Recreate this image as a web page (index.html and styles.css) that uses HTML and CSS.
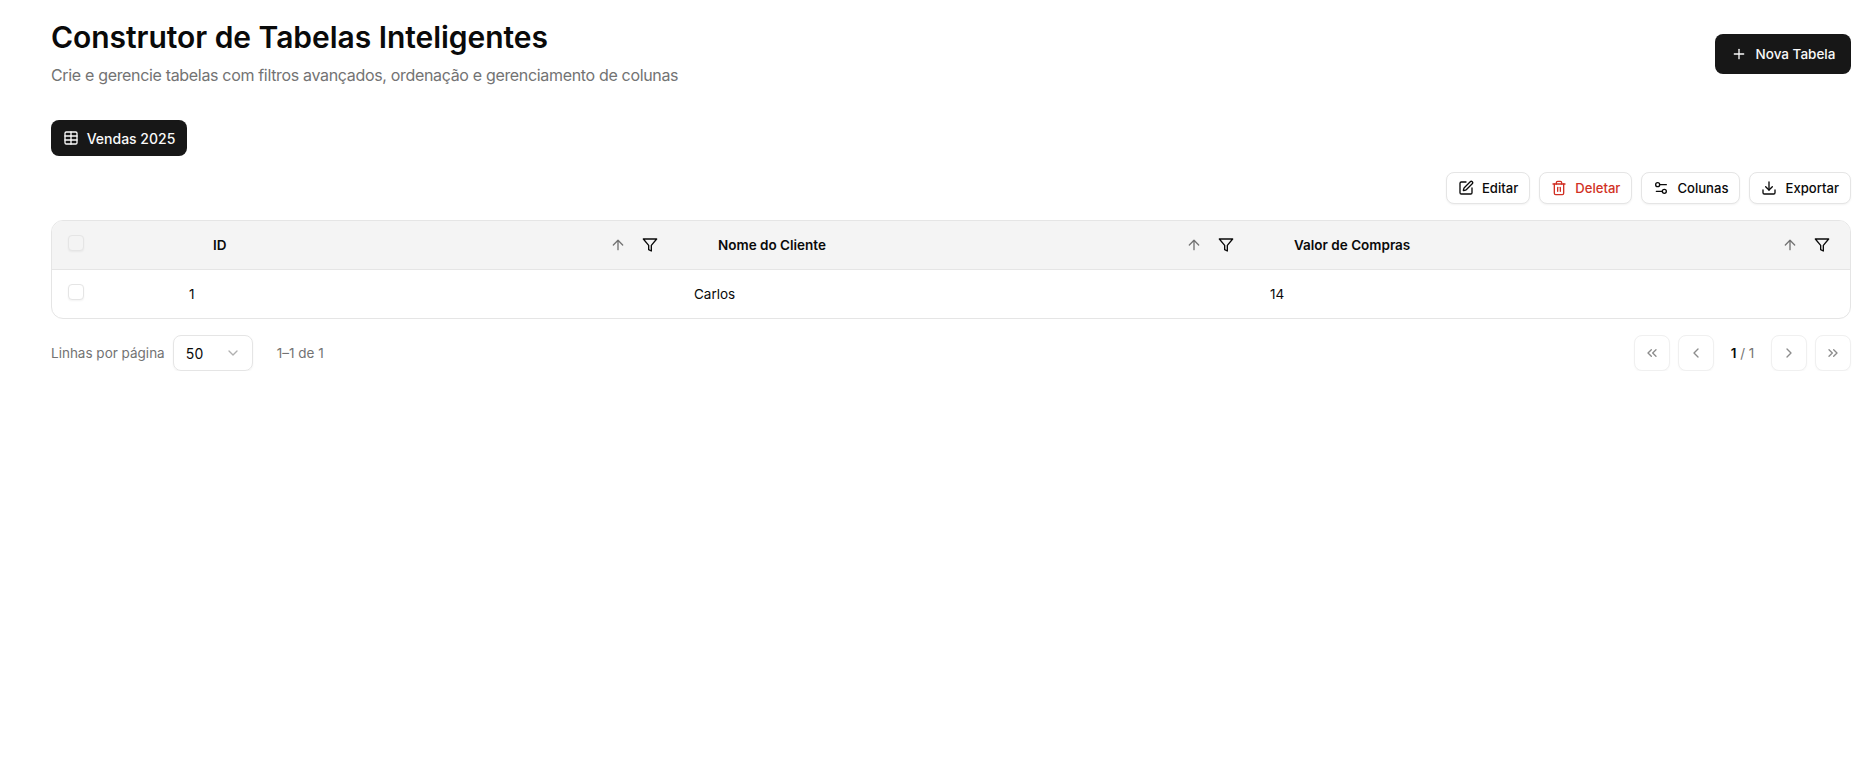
FILE: index.html
```html
<!DOCTYPE html>
<html lang="pt-BR">
<head>
<meta charset="utf-8">
<title>Construtor de Tabelas Inteligentes</title>
<link rel="stylesheet" href="styles.css">
</head>
<body>
<svg class="sprite" aria-hidden="true">
  <symbol id="i-plus" viewBox="0 0 24 24"><path d="M5 12h14"/><path d="M12 5v14"/></symbol>
  <symbol id="i-table" viewBox="0 0 24 24"><path d="M12 3v18"/><rect x="3" y="3" width="18" height="18" rx="2"/><path d="M3 9h18"/><path d="M3 15h18"/></symbol>
  <symbol id="i-edit" viewBox="0 0 24 24"><path d="M12 3H5a2 2 0 0 0-2 2v14a2 2 0 0 0 2 2h14a2 2 0 0 0 2-2v-7"/><path d="M18.375 2.625a1 1 0 0 1 3 3l-9.013 9.014a2 2 0 0 1-.853.505l-2.873.84a.5.5 0 0 1-.62-.62l.84-2.873a2 2 0 0 1 .506-.852z"/></symbol>
  <symbol id="i-trash" viewBox="0 0 24 24"><path d="M3 6h18"/><path d="M19 6v14c0 1-1 2-2 2H7c-1 0-2-1-2-2V6"/><path d="M8 6V4c0-1 1-2 2-2h4c1 0 2 1 2 2v2"/><path d="M10 11v6"/><path d="M14 11v6"/></symbol>
  <symbol id="i-cols" viewBox="0 0 24 24"><path d="M20 7h-9"/><path d="M14 17H5"/><circle cx="17" cy="17" r="3"/><circle cx="7" cy="7" r="3"/></symbol>
  <symbol id="i-download" viewBox="0 0 24 24"><path d="M12 15V3"/><path d="M21 15v4a2 2 0 0 1-2 2H5a2 2 0 0 1-2-2v-4"/><path d="m7 10 5 5 5-5"/></symbol>
  <symbol id="i-up" viewBox="0 0 24 24"><path d="m5 12 7-7 7 7"/><path d="M12 19V5"/></symbol>
  <symbol id="i-filter" viewBox="0 0 24 24"><path d="M22 3H2l8 9.46V19l4 2v-8.54z"/></symbol>
  <symbol id="i-down" viewBox="0 0 24 24"><path d="m6 9 6 6 6-6"/></symbol>
  <symbol id="i-first" viewBox="0 0 24 24"><path d="m11 17-5-5 5-5"/><path d="m18 17-5-5 5-5"/></symbol>
  <symbol id="i-prev" viewBox="0 0 24 24"><path d="m15 18-6-6 6-6"/></symbol>
  <symbol id="i-next" viewBox="0 0 24 24"><path d="m9 18 6-6-6-6"/></symbol>
  <symbol id="i-last" viewBox="0 0 24 24"><path d="m6 17 5-5-5-5"/><path d="m13 17 5-5-5-5"/></symbol>
</svg>

<main class="page">
  <header class="page-header">
    <div class="page-heading">
      <h1 class="title">Construtor de Tabelas Inteligentes</h1>
      <p class="subtitle">Crie e gerencie tabelas com filtros avançados, ordenação e gerenciamento de colunas</p>
    </div>
    <button class="btn-primary new-table"><svg class="icon"><use href="#i-plus"/></svg>Nova Tabela</button>
  </header>

  <nav class="tabs">
    <button class="btn-primary tab"><svg class="icon"><use href="#i-table"/></svg>Vendas 2025</button>
  </nav>

  <div class="actions">
    <button class="btn-outline"><svg class="icon"><use href="#i-edit"/></svg>Editar</button>
    <button class="btn-outline danger"><svg class="icon"><use href="#i-trash"/></svg>Deletar</button>
    <button class="btn-outline"><svg class="icon"><use href="#i-cols"/></svg>Colunas</button>
    <button class="btn-outline"><svg class="icon"><use href="#i-download"/></svg>Exportar</button>
  </div>

  <div class="table-wrap">
    <table class="data">
      <colgroup>
        <col class="col-check"><col class="col-id"><col class="col-name"><col class="col-value">
      </colgroup>
      <thead>
        <tr>
          <th class="check-cell"><span class="checkbox"></span></th>
          <th><div class="head"><span class="head-label">ID</span><svg class="icon sort"><use href="#i-up"/></svg><svg class="icon funnel"><use href="#i-filter"/></svg></div></th>
          <th><div class="head"><span class="head-label">Nome do Cliente</span><svg class="icon sort"><use href="#i-up"/></svg><svg class="icon funnel"><use href="#i-filter"/></svg></div></th>
          <th><div class="head"><span class="head-label">Valor de Compras</span><svg class="icon sort"><use href="#i-up"/></svg><svg class="icon funnel"><use href="#i-filter"/></svg></div></th>
        </tr>
      </thead>
      <tbody>
        <tr>
          <td class="check-cell"><span class="checkbox"></span></td>
          <td>1</td>
          <td>Carlos</td>
          <td>14</td>
        </tr>
      </tbody>
    </table>
  </div>

  <footer class="pager">
    <div class="pager-left">
      <span class="muted">Linhas por página</span>
      <div class="select"><span>50</span><svg class="icon chev"><use href="#i-down"/></svg></div>
      <span class="muted range">1–1 de 1</span>
    </div>
    <div class="pager-right">
      <button class="page-btn"><svg class="icon"><use href="#i-first"/></svg></button>
      <button class="page-btn"><svg class="icon"><use href="#i-prev"/></svg></button>
      <span class="page-num"><b>1</b> / 1</span>
      <button class="page-btn"><svg class="icon"><use href="#i-next"/></svg></button>
      <button class="page-btn"><svg class="icon"><use href="#i-last"/></svg></button>
    </div>
  </footer>
</main>
</body>
</html>
```

FILE: styles.css
```css
* { box-sizing: border-box; }
html, body { margin: 0; padding: 0; background: #fff; }
body { font-family: Inter, "Liberation Sans", sans-serif; color: #0a0a0a; }
button { font-family: inherit; cursor: pointer; }

.sprite { width: 0; height: 0; position: absolute; }
.icon {
  width: 16px; height: 16px; flex: none;
  fill: none; stroke: currentColor; stroke-width: 2;
  stroke-linecap: round; stroke-linejoin: round;
}

.page { padding: 19px 24px 0 51px; }

.page-header { display: flex; justify-content: space-between; align-items: center; height: 70px; }
.page-heading { align-self: flex-start; }
.title { margin: 0; font-size: 30px; line-height: 36px; font-weight: 600; letter-spacing: -0.04px; }
.subtitle { margin: 8px 0 0; font-size: 16px; line-height: 24px; color: #737373; letter-spacing: -0.33px; }

.btn-primary {
  display: inline-flex; align-items: center; border: 0; border-radius: 8px;
  background: #171717; color: #fafafa; font-size: 14px; font-weight: 500;
}
.new-table { width: 136px; height: 40px; justify-content: center; gap: 9px; font-size: 13.5px; }
.tabs { margin-top: 31px; display: flex; }
.tab { width: 136px; height: 36px; justify-content: center; gap: 8px; }

.actions { margin-top: 16px; display: flex; justify-content: flex-end; gap: 9px; }
.btn-outline {
  display: inline-flex; align-items: center; justify-content: center; gap: 8px;
  height: 32px; padding: 0 11px; background: #fff; color: #0a0a0a;
  border: 1px solid #e5e5e5; border-radius: 8px; font-size: 13.1px; font-weight: 500;
  box-shadow: 0 1px 2px rgba(0,0,0,.05);
}
.btn-outline.danger { color: #d13024; }

.table-wrap { margin-top: 16px; border: 1px solid #e5e5e5; border-radius: 12px; overflow: hidden; }
.data { width: 100%; border-collapse: collapse; table-layout: fixed; font-size: 13.5px; }
.col-check { width: 121px; }
.col-id { width: 505px; }
.col-name { width: 576px; }
.data thead tr { background: #f4f4f4; border-bottom: 1px solid #e5e5e5; height: 48px; }
.data tbody tr { height: 49px; }
.data th { padding: 0 16px; font-weight: 600; text-align: left; }
.data td { padding: 0 16px; }
.data .check-cell { padding: 0 0 0 16px; }
.checkbox {
  display: block; width: 16px; height: 16px; margin-top: -4px; background: #fff;
  border: 1px solid #e5e5e5; border-radius: 4px; box-shadow: 0 1px 2px rgba(0,0,0,.05);
}
thead .checkbox { background: #f4f4f4; }

.head { display: flex; align-items: center; padding-left: 24px; }
.head-label { flex: 1; }
.sort { color: #737373; margin-right: 16px; }
.funnel { color: #0a0a0a; margin-right: 4px; }

.pager { margin-top: 16px; display: flex; justify-content: space-between; align-items: center; height: 36px; }
.pager-left, .pager-right { display: flex; align-items: center; }
.muted { font-size: 13.5px; color: #737373; }
.select {
  display: flex; align-items: center; justify-content: space-between;
  width: 80px; height: 36px; margin-left: 8px; padding: 0 11px 0 12px;
  border: 1px solid #e5e5e5; border-radius: 8px; font-size: 14px; letter-spacing: .3px;
  box-shadow: 0 1px 2px rgba(0,0,0,.05);
}
.chev { color: #b0b0b0; }
.range { margin-left: 24px; }
.pager-right { gap: 8px; }
.page-btn {
  display: flex; align-items: center; justify-content: center;
  width: 36px; height: 36px; padding: 0; background: #fff; color: #8c8c8c;
  border: 1px solid #f0f0f0; border-radius: 8px; box-shadow: 0 1px 2px rgba(0,0,0,.03);
}
.page-num { width: 41px; text-align: center; font-size: 13.5px; color: #737373; white-space: nowrap; }
.page-num b { color: #0a0a0a; font-weight: 600; }
```
